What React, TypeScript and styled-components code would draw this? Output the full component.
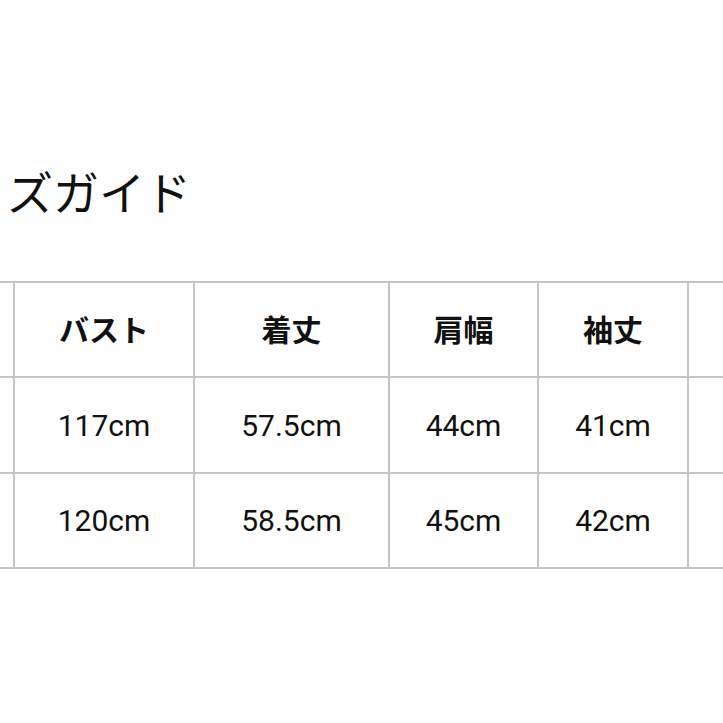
import React from 'react';
import styled, { createGlobalStyle } from 'styled-components';

const GlobalStyle = createGlobalStyle`
  html, body {
    margin: 0;
    padding: 0;
    background: #ffffff;
  }
  body {
    font-family: Roboto, "Noto Sans CJK JP", sans-serif;
    color: #141414;
    overflow: hidden;
  }
`;

const Page = styled.div`
  width: 723px;
  height: 723px;
  overflow: hidden;
  padding-top: 167px;
  box-sizing: border-box;
`;

const Title = styled.h1`
  margin: 0 0 68px 7px;
  font-family: "Noto Sans CJK JP", sans-serif;
  font-weight: 400;
  font-size: 46px;
  line-height: 46px;
  color: #111111;
  white-space: nowrap;
`;

const Grid = styled.div`
  display: grid;
  grid-template-columns: 13px 178px 193px 147px 148px 1fr;
  grid-template-rows: 93px 94px 93px;
  gap: 2px;
  padding: 2px 0;
  background: #c4c4c4;
`;

const Cell = styled.div<{ $head?: boolean }>`
  background: #ffffff;
  display: flex;
  align-items: center;
  justify-content: center;
  padding-bottom: ${(p) => (p.$head ? '4px' : '0')};
  box-sizing: border-box;
  font-family: ${(p) => (p.$head ? '"Noto Sans CJK JP", sans-serif' : 'Roboto, "Noto Sans CJK JP", sans-serif')};
  font-weight: ${(p) => (p.$head ? 700 : 400)};
  font-size: 30px;
  color: #111111;
  white-space: nowrap;
`;

const header = ['バスト', '着丈', '肩幅', '袖丈'];

const rows = [
  ['117cm', '57.5cm', '44cm', '41cm'],
  ['120cm', '58.5cm', '45cm', '42cm']
];

function App() {
  return (
    <>
      <GlobalStyle />
      <Page>
        <Title>ズガイド</Title>
        <Grid>
          <Cell $head />
          {header.map((h) => (
            <Cell key={h} $head>
              {h}
            </Cell>
          ))}
          <Cell $head />
          {rows.map((row, i) => (
            <React.Fragment key={i}>
              <Cell />
              {row.map((v, j) => (
                <Cell key={j}>{v}</Cell>
              ))}
              <Cell />
            </React.Fragment>
          ))}
        </Grid>
      </Page>
    </>
  );
}

export default App;
